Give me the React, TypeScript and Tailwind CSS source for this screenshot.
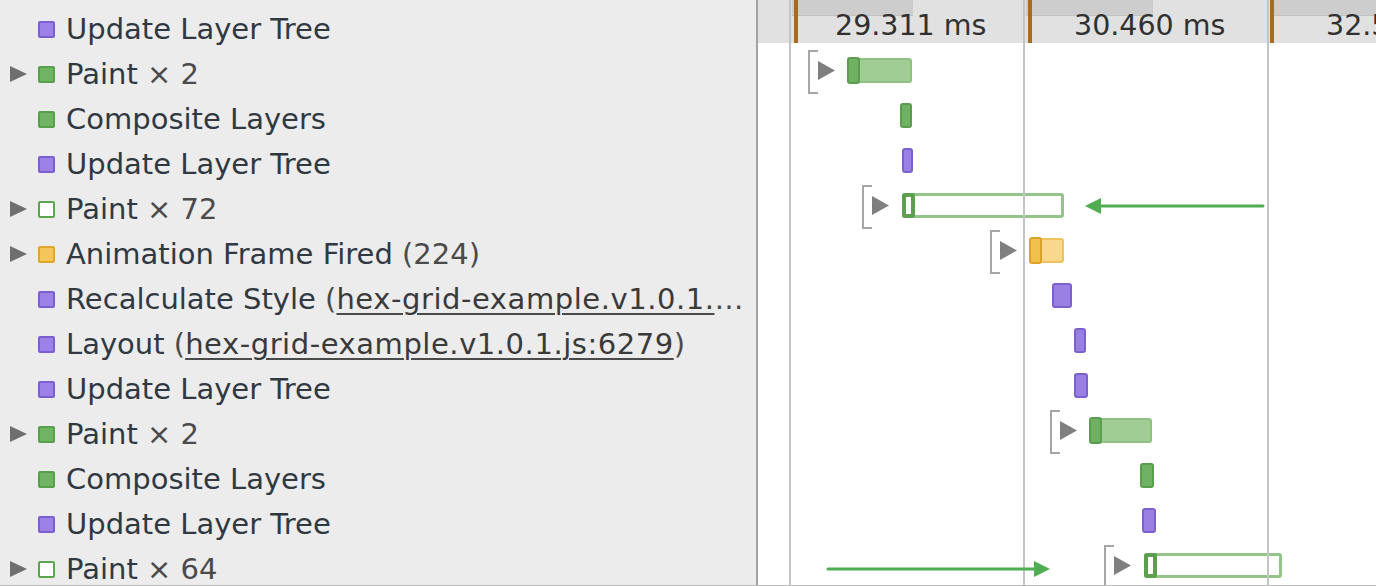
import React from "react";

type Kind = "purple" | "green" | "orange" | "outline";

const squareCls: Record<Kind, string> = {
  purple: "bg-[#9c81e6] border-[#7b5fd0]",
  green: "bg-[#6fb462] border-[#57a04a]",
  orange: "bg-[#f3c65a] border-[#e0a52a]",
  outline: "bg-white border-[#5ba54f]",
};

const Dim = ({ children }: { children: React.ReactNode }) => (
  <span className="text-[#4a4a4a]">{children}</span>
);

const Link = ({ children }: { children: React.ReactNode }) => (
  <span className="tracking-[0.55px] text-[#3a3a3a] underline decoration-[2px] decoration-[#4a4a4a] underline-offset-[4px]">
    {children}
  </span>
);

type Row = { kind: Kind; expand?: boolean; label: React.ReactNode };

const rows: Row[] = [
  { kind: "purple", label: <>Update Layer Tree</> },
  { kind: "green", expand: true, label: <>Paint <Dim>× 2</Dim></> },
  { kind: "green", label: <>Composite Layers</> },
  { kind: "purple", label: <>Update Layer Tree</> },
  { kind: "outline", expand: true, label: <>Paint <Dim>× 72</Dim></> },
  { kind: "orange", expand: true, label: <>Animation Frame Fired <Dim>(224)</Dim></> },
  {
    kind: "purple",
    label: (
      <>
        Recalculate Style <Dim>(</Dim>
        <Link>hex-grid-example.v1.0.1.</Link>
        <Dim>…</Dim>
      </>
    ),
  },
  {
    kind: "purple",
    label: (
      <>
        Layout <Dim>(</Dim>
        <Link>hex-grid-example.v1.0.1.js:6279</Link>
        <Dim>)</Dim>
      </>
    ),
  },
  { kind: "purple", label: <>Update Layer Tree</> },
  { kind: "green", expand: true, label: <>Paint <Dim>× 2</Dim></> },
  { kind: "green", label: <>Composite Layers</> },
  { kind: "purple", label: <>Update Layer Tree</> },
  { kind: "outline", expand: true, label: <>Paint <Dim>× 64</Dim></> },
];

type Ev = { row: number; x: number; w: number; kind: Kind; group?: boolean };

const events: Ev[] = [
  { row: 1, x: 90, w: 64, kind: "green", group: true },
  { row: 2, x: 142, w: 12, kind: "green" },
  { row: 3, x: 144, w: 11, kind: "purple" },
  { row: 4, x: 144, w: 162, kind: "outline", group: true },
  { row: 5, x: 272, w: 34, kind: "orange", group: true },
  { row: 6, x: 294, w: 20, kind: "purple" },
  { row: 7, x: 316, w: 12, kind: "purple" },
  { row: 8, x: 316, w: 14, kind: "purple" },
  { row: 9, x: 332, w: 62, kind: "green", group: true },
  { row: 10, x: 382, w: 14, kind: "green" },
  { row: 11, x: 384, w: 14, kind: "purple" },
  { row: 12, x: 386, w: 138, kind: "outline", group: true },
];

const singleCls: Record<Kind, string> = {
  purple: "bg-[#9b80e4] border-[#7c60cf]",
  green: "bg-[#70b263] border-[#5a9e4d]",
  orange: "bg-[#f0c14f] border-[#dda328]",
  outline: "bg-white border-[#5c9f4f]",
};

const groupLight: Record<Kind, string> = {
  purple: "bg-[#c3b2f0] border-2 border-[#a996e6]",
  green: "bg-[#9fcd93] border-2 border-[#8ec182]",
  orange: "bg-[#f7d88d] border-2 border-[#efc35d]",
  outline: "bg-white border-[3px] border-[#93c488]",
};

const groupDark: Record<Kind, string> = {
  purple: "bg-[#9b80e4] border-2 border-[#7c60cf]",
  green: "bg-[#70b062] border-2 border-[#5c9e4f]",
  orange: "bg-[#f0c14f] border-2 border-[#dda328]",
  outline: "bg-white border-[4px] border-[#5c9f4f]",
};

const marks = [
  { barL: 34, barW: 121, o: 36, t: 77, label: "29.311 ms" },
  { barL: 268, barW: 127, o: 270, t: 316, label: "30.460 ms" },
  { barL: 516, barW: 110, o: 512, t: 568, label: "32.5" },
];

const grid = [31, 265, 509];

function LeftTri() {
  return (
    <svg width="17" height="16" viewBox="0 0 17 16" className="shrink-0">
      <polygon points="0,0 17,8 0,16" fill="#6f6f6f" />
    </svg>
  );
}

function EventView({ e }: { e: Ev }) {
  if (!e.group) {
    return (
      <div
        className={`absolute top-[7px] h-[25px] rounded-[3px] border-2 ${singleCls[e.kind]}`}
        style={{ left: e.x, width: e.w }}
      />
    );
  }
  return (
    <div className="absolute top-[-1px] flex h-[44px] items-start" style={{ left: e.x - 40 }}>
      <div className="h-[44px] w-[10px] shrink-0 border-2 border-r-0 border-[#a6a6a6]" />
      <svg width="17" height="19" viewBox="0 0 17 19" className="mt-[11px] shrink-0">
        <polygon points="0,0 17,9.5 0,19" fill="#7f7f7f" />
      </svg>
      <div
        className={`relative ml-[13px] mt-[8px] h-[25px] shrink-0 rounded-[3px] ${groupLight[e.kind]}`}
        style={{ width: e.w }}
      >
        <div
          className={`absolute bottom-[-3px] left-[-3px] top-[-3px] w-[13px] rounded-[3px] ${groupDark[e.kind]}`}
        />
      </div>
    </div>
  );
}

export default function App() {
  return (
    <div className="flex h-[586px] w-[1376px] overflow-hidden border-b border-[#bababa] font-['DejaVu_Sans',sans-serif]">
      <div className="w-[756px] shrink-0 overflow-hidden bg-[#ececec] pt-[6px]">
        {rows.map((r, i) => (
          <div key={i} className="flex h-[45px] items-center whitespace-nowrap pl-[10px]">
            <div className="flex w-[17px] shrink-0 items-center">{r.expand ? <LeftTri /> : null}</div>
            <div
              className={`ml-[11px] mt-[2px] h-[17px] w-[17px] shrink-0 rounded-[2px] border-2 ${squareCls[r.kind]}`}
            />
            <div className="ml-[11px] mt-[2px] text-[29px] leading-[45px] text-[#303942]">{r.label}</div>
          </div>
        ))}
      </div>
      <div className="w-[2px] shrink-0 bg-[#a3a3a3]" />
      <div className="relative flex-1 overflow-hidden bg-white pt-[6px]">
        {rows.map((_, i) => (
          <div key={i} className="relative h-[45px]">
            {events
              .filter((e) => e.row === i)
              .map((e, j) => (
                <EventView key={j} e={e} />
              ))}
          </div>
        ))}

        <div className="absolute left-0 right-0 top-0 h-[43px] overflow-hidden bg-[#e1e1e1]">
          {marks.map((m, i) => (
            <React.Fragment key={i}>
              <div
                className="absolute top-0 h-[16px] border-b border-[#c2c2c2] bg-[#cdcdcd]"
                style={{ left: m.barL, width: m.barW }}
              />
              <div className="absolute top-0 h-[43px] w-[4px] bg-[#a86a1d]" style={{ left: m.o }} />
              <div
                className="absolute top-[12px] whitespace-nowrap text-[28.5px] leading-[28px] text-[#303030]"
                style={{ left: m.t }}
              >
                {m.label}
              </div>
            </React.Fragment>
          ))}
        </div>

        {grid.map((g) => (
          <div key={g} className="absolute bottom-0 top-0 w-[2px] bg-[#c4c4c4]" style={{ left: g }} />
        ))}

        <svg className="pointer-events-none absolute left-0 top-0" width="618" height="586">
          <line x1="341" y1="206" x2="505" y2="206" stroke="#4fae52" strokeWidth="3" strokeLinecap="round" />
          <polygon points="327,206 343,198 343,214" fill="#4fae52" />
          <line x1="70" y1="569" x2="277" y2="569" stroke="#4fae52" strokeWidth="3" strokeLinecap="round" />
          <polygon points="292,569 276,561 276,577" fill="#4fae52" />
        </svg>
      </div>
    </div>
  );
}
